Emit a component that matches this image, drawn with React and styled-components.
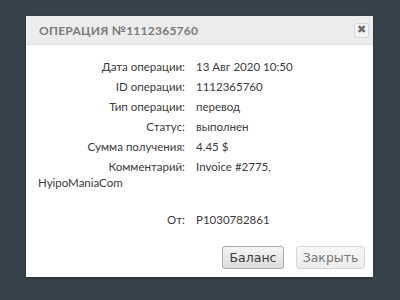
import React from 'react';
import styled, { createGlobalStyle } from 'styled-components';

const GlobalStyle = createGlobalStyle`
	html, body {
		margin: 0;
		padding: 0;
		background: #36434b;
	}
	body {
		width: 400px;
		height: 300px;
		overflow: hidden;
		font-family: 'Lato', 'Open Sans', sans-serif;
	}
`;

const Page = styled.div`
	padding: 16px 27px 0 26px;
`;

const Modal = styled.div`
	background: #fff;
	height: 261px;
	display: flex;
	flex-direction: column;
	box-shadow: 0 1px 3px rgba(0, 0, 0, 0.3);
`;

const Header = styled.div`
	height: 28px;
	background: #ececec;
	border-bottom: 1px solid #e2e2e2;
	display: flex;
	align-items: center;
	justify-content: space-between;
	padding: 0 4px 0 13px;
`;

const Title = styled.h3`
	margin: 0;
	font-family: 'Lato', sans-serif;
	font-size: 12px;
	font-weight: 700;
	letter-spacing: 0.25px;
	color: #7a7a7a;
`;

const CloseButton = styled.button`
	width: 15px;
	height: 15px;
	padding: 0;
	border: 1px solid #d8d8d8;
	border-radius: 2px;
	background: #f2f2f2;
	color: #6a6a6a;
	font-size: 11px;
	font-weight: bold;
	line-height: 12px;
	font-family: 'DejaVu Sans', sans-serif;
`;

const Body = styled.div`
	flex: 1;
	padding: 11px 12px 0;
	color: #3a3a3a;
	font-size: 11.5px;
`;

const Row = styled.div`
	display: grid;
	grid-template-columns: 147px 1fr;
	column-gap: 11px;
	height: 20px;
	align-items: center;
`;

const Label = styled.span`
	text-align: right;
`;

const Wrap = styled.div`
	height: 14px;
	line-height: 14px;
`;

const FromRow = styled(Row)`
	margin-top: 19px;
`;

const Footer = styled.div`
	display: flex;
	justify-content: flex-end;
	gap: 12px;
	padding: 0 8px 8px 0;
`;

const Button = styled.button`
	height: 23px;
	padding: 0;
	border-radius: 3px;
	font-family: 'DejaVu Sans', sans-serif;
	font-size: 12.5px;
	border: 1px solid ${(p) => (p.$primary ? '#a9a9a9' : '#d6d6d6')};
	color: ${(p) => (p.$primary ? '#3c3c3c' : '#777')};
	background: ${(p) =>
		p.$primary
			? 'linear-gradient(#f4f4f4, #dcdcdc)'
			: 'linear-gradient(#f7f7f7, #ececec)'};
	width: ${(p) => p.$w}px;
`;

const rows = [
	['Дата операции:', '13 Авг 2020 10:50'],
	['ID операции:', '1112365760'],
	['Тип операции:', 'перевод'],
	['Статус:', 'выполнен'],
	['Сумма получения:', '4.45 $'],
	['Комментарий:', 'Invoice #2775,'],
];

const App = () => {
	return (
		<>
			<GlobalStyle />
			<Page>
				<Modal>
					<Header>
						<Title>ОПЕРАЦИЯ №1112365760</Title>
						<CloseButton>✖</CloseButton>
					</Header>
					<Body>
						{rows.map(([label, value]) => (
							<Row key={label}>
								<Label>{label}</Label>
								<span>{value}</span>
							</Row>
						))}
						<Wrap>HyipoManiaCom</Wrap>
						<FromRow>
							<Label>От:</Label>
							<span>P1030782861</span>
						</FromRow>
					</Body>
					<Footer>
						<Button $primary $w={62}>Баланс</Button>
						<Button $w={69}>Закрыть</Button>
					</Footer>
				</Modal>
			</Page>
		</>
	);
};

export default App;
